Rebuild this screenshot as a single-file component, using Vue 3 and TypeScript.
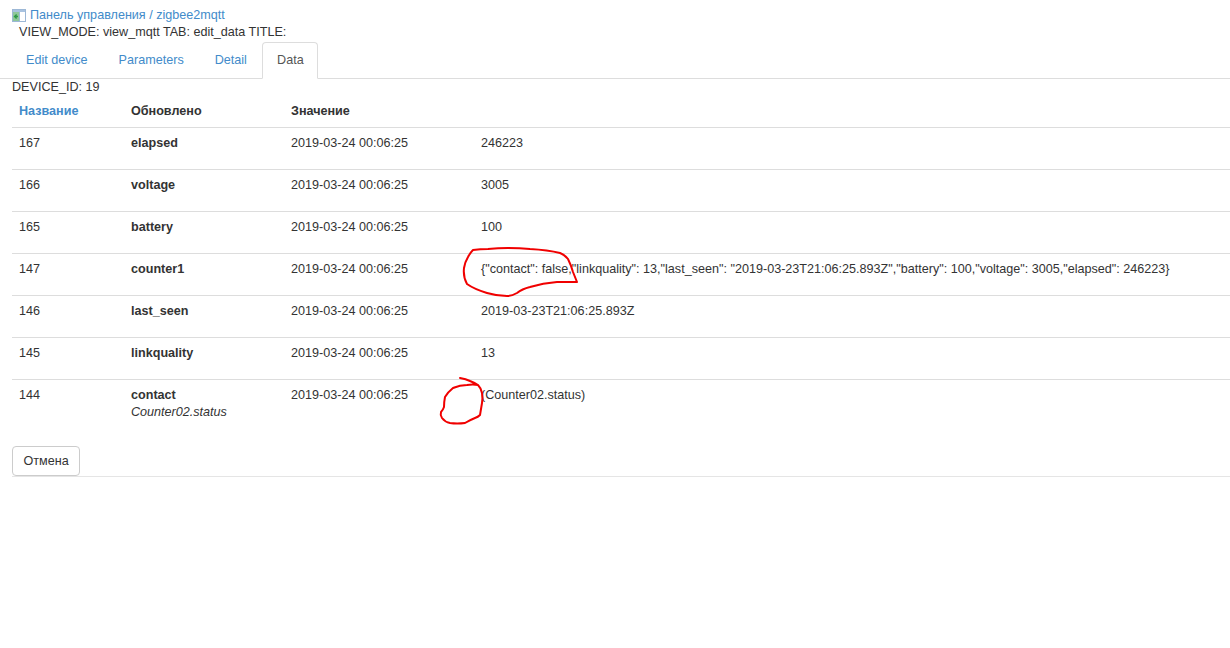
<script setup lang="ts">
interface Row { id: number; name: string; sub?: string; value: string }
const tabs = ['Edit device', 'Parameters', 'Detail', 'Data']
const rows: Row[] = [
  { id: 167, name: 'elapsed', value: '246223' },
  { id: 166, name: 'voltage', value: '3005' },
  { id: 165, name: 'battery', value: '100' },
  { id: 147, name: 'counter1', value: '{"contact": false,"linkquality": 13,"last_seen": "2019-03-23T21:06:25.893Z","battery": 100,"voltage": 3005,"elapsed": 246223}' },
  { id: 146, name: 'last_seen', value: '2019-03-23T21:06:25.893Z' },
  { id: 145, name: 'linkquality', value: '13' },
  { id: 144, name: 'contact', sub: 'Counter02.status', value: '(Counter02.status)' },
]
</script>

<template>
  <div class="page">
    <div class="crumb">
      <svg class="ico" width="14" height="13" viewBox="0 0 14 13">
        <rect x="0.5" y="0.5" width="13" height="12" fill="#fff" stroke="#9db8d6" />
        <rect x="1" y="1" width="12" height="2" fill="#a9c3e0" />
        <rect x="1" y="3" width="6" height="9" fill="#8fc79a" />
        <path d="M6 7.5H3M4.6 5.5L2.6 7.5 4.6 9.5" stroke="#2e9a46" stroke-width="1.4" fill="none" />
        <path d="M7.5 3v9" stroke="#9db8d6" />
      </svg>
      <a>Панель управления</a><span class="sep"> / </span><a>zigbee2mqtt</a>
    </div>
    <div class="mode">VIEW_MODE: view_mqtt TAB: edit_data TITLE:</div>
    <ul class="tabs">
      <li v-for="t in tabs" :key="t" :class="{ active: t === 'Data' }">{{ t }}</li>
    </ul>
    <div class="devid">DEVICE_ID: 19</div>
    <table>
      <thead>
        <tr>
          <th class="sorted">Название</th>
          <th>Обновлено</th>
          <th>Значение</th>
          <th></th>
        </tr>
      </thead>
      <tbody>
        <tr v-for="r in rows" :key="r.id">
          <td>{{ r.id }}</td>
          <td><b>{{ r.name }}</b><template v-if="r.sub"><br /><i>{{ r.sub }}</i></template></td>
          <td>2019-03-24 00:06:25</td>
          <td>{{ r.value }}</td>
        </tr>
      </tbody>
    </table>
    <div class="actions"><button type="button">Отмена</button></div>
    <svg class="marks" width="1230" height="648" viewBox="0 0 1230 648">
      <path d="M473 250Q480 249 488 249Q498 248 508 248Q520 248 530 249Q548 250 560 253Q565 255 568 259Q571 265 573 272L577 282Q566 282 557 282Q543 283 530 287Q522 289 517 293Q512 296 507 296Q497 296 487 293Q474 289 467 284Q463 277 464 268Q465 262 468 257Q470 253 473 250Z" />
      <path d="M460 378Q466 379 470 381Q475 383 478 385Q481 388 482 393Q483 398 482 403L480 415Q478 417 475 418Q470 420 465 423Q457 424 450 423Q445 422 442 418Q440 415 441 412Q443 410 444 407Q444 402 445 397Q448 392 453 388Q460 385 467 385Q473 384 478 385" />
    </svg>
  </div>
</template>

<style scoped>
.page {
  position: relative;
  width: 1230px;
  height: 648px;
  overflow: hidden;
  background: #fff;
  color: #333;
  font-family: "Liberation Sans", Arial, sans-serif;
  font-size: 12.6px;
  line-height: 17px;
}
.crumb {
  height: 17px;
  padding: 7px 0 0 12px;
  color: #428bca;
  display: flex;
  align-items: center;
}
.crumb a { color: #428bca; }
.sep { white-space: pre; }
.ico { margin-right: 4px; flex: none; }
.mode { padding-left: 19px; height: 17px; }
.tabs {
  list-style: none;
  margin: 0;
  padding: 1px 0 0 11px;
  display: flex;
  height: 36px;
  border-bottom: 1px solid #ddd;
}
.tabs li {
  padding: 9px 14.5px 0;
  height: 37px;
  box-sizing: border-box;
  color: #428bca;
  border: 1px solid transparent;
  border-radius: 4px 4px 0 0;
}
.tabs li:first-child { padding-left: 14px; }
.tabs li.active {
  padding: 9px 13.7px 0;
  color: #555;
  background: #fff;
  border-color: #ddd;
  border-bottom-color: #fff;
}
.devid { padding-left: 12px; height: 17px; }
table {
  margin-left: 12px;
  width: 1218px;
  border-collapse: collapse;
  table-layout: fixed;
}
th {
  text-align: left;
  font-weight: 700;
  padding: 7px;
  height: 31px;
  box-sizing: border-box;
  border-bottom: 1px solid #ddd;
  color: #333;
}
th.sorted { color: #428bca; }
th:nth-child(1) { width: 112px; }
th:nth-child(2) { width: 160px; }
th:nth-child(3) { width: 190px; }
td {
  padding: 7px;
  vertical-align: top;
  height: 42px;
  box-sizing: border-box;
  border-top: 1px solid #ddd;
  white-space: nowrap;
}
tbody tr:first-child td { border-top: 0; }
i { color: #333; }
.actions {
  margin-left: 12px;
  padding-top: 18px;
  height: 30px;
  border-bottom: 1px solid #e5e5e5;
}
button {
  font: inherit;
  height: 30px;
  padding: 0 10.5px;
  color: #333;
  background: #fff;
  border: 1px solid #ccc;
  border-radius: 4px;
  display: block;
}
.marks { position: absolute; left: 0; top: 0; pointer-events: none; }
.marks path { fill: none; stroke: #f00000; stroke-width: 2; stroke-linejoin: round; stroke-linecap: round; }
</style>
